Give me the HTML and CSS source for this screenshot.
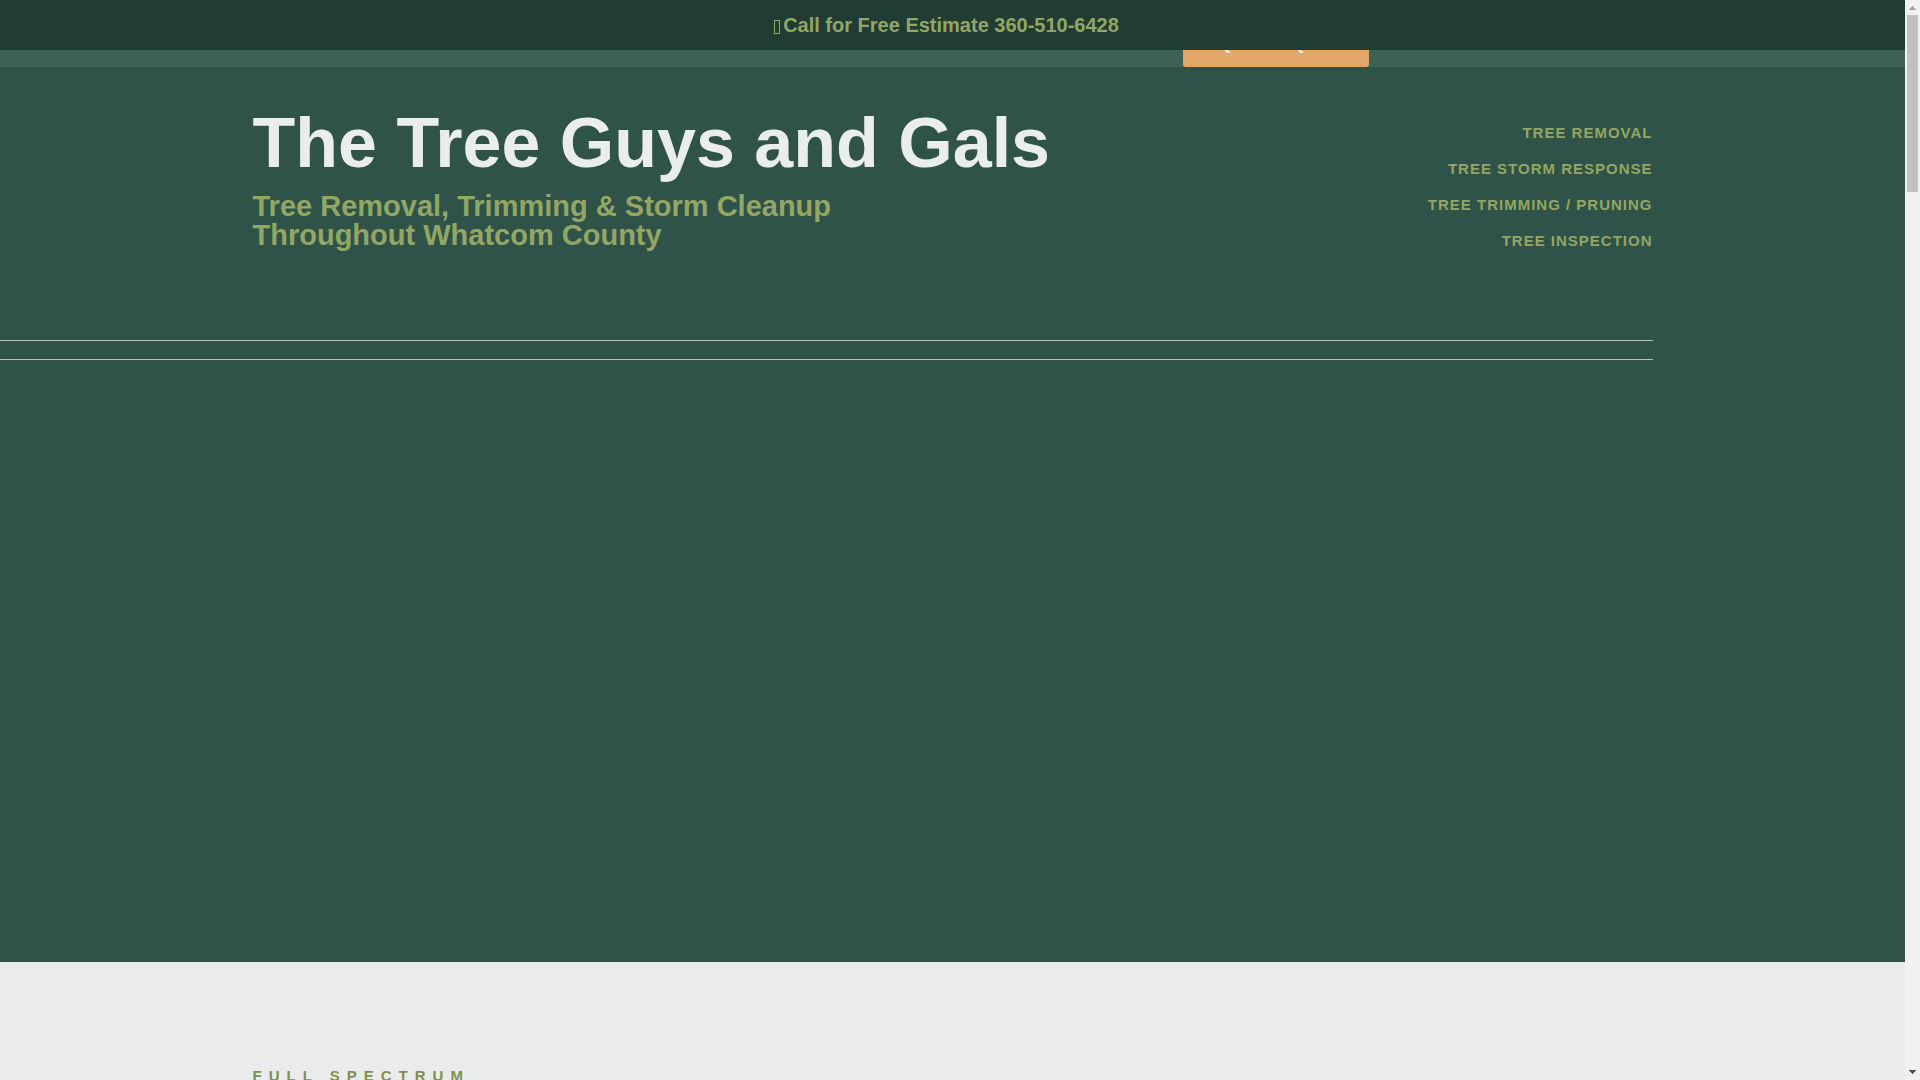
FILE: index.html
```html
<!DOCTYPE html>
<html lang="en">
<head>
    <meta charset="UTF-8">
    <meta name="viewport" content="width=device-width, initial-scale=1">
    <title>The Tree Guys and Gals</title>
    <link rel="stylesheet" href="styles.css">
</head>
<body>
    <div class="page">
        <div class="call-bar">
            <a href="tel:3605106428"><span class="phone-icon"></span>Call for Free Estimate 360-510-6428</a>
        </div>
        <header class="top-strip">
            <div class="container">
                <a class="quote-button" href="#quote">REQUEST A QUOTE</a>
            </div>
        </header>
        <main>
            <section class="hero">
                <div class="container hero-row">
                    <div class="hero-text">
                        <h1>The Tree Guys and Gals</h1>
                        <h2>Tree Removal, Trimming &amp; Storm Cleanup<br>Throughout Whatcom County</h2>
                    </div>
                    <nav class="services-nav">
                        <a href="#removal">TREE REMOVAL</a>
                        <a href="#storm">TREE STORM RESPONSE</a>
                        <a href="#trimming">TREE TRIMMING / PRUNING</a>
                        <a href="#inspection">TREE INSPECTION</a>
                    </nav>
                </div>
                <div class="lines"></div>
            </section>
            <section class="services">
                <div class="container">
                    <h3>FULL SPECTRUM</h3>
                </div>
            </section>
        </main>
    </div>
    <div class="scrollbar" aria-hidden="true">
        <svg width="15" height="15" viewBox="0 0 15 15" shape-rendering="crispEdges"><path d="M4 10h7v-1h-1v-1h-1v-1h-1v-1h-1v1h-1v1h-1v1h-1z" fill="#a3a3a3"/></svg>
        <div class="thumb"></div>
        <svg class="down" width="15" height="15" viewBox="0 0 15 15" shape-rendering="crispEdges"><path d="M4 5h7v1h-1v1h-1v1h-1v1h-1v-1h-1v-1h-1v-1h-1z" fill="#505050"/></svg>
    </div>
</body>
</html>
```

FILE: styles.css
```css
* { box-sizing: border-box; }
body {
    display: flex;
    height: 100vh;
    margin: 0;
    overflow: hidden;
    font-family: "Liberation Sans", Arial, sans-serif;
    font-weight: 700;
    background: #e9eceb;
}
a { color: inherit; text-decoration: none; }
h1, h2, h3 { margin: 0; }
.page {
    position: relative;
    flex: 1;
    min-width: 0;
    overflow: hidden;
}
.container {
    max-width: 1400px;
    margin: 0 auto;
}

/* phone bar, stays over the header */
.call-bar {
    position: absolute;
    top: 0;
    left: 0;
    right: 0;
    z-index: 2;
    height: 50px;
    padding-right: 12px;
    background: #213c33;
    color: #93a663;
    font-size: 20px;
    line-height: 50px;
    text-align: center;
}
.phone-icon {
    display: inline-block;
    width: 6px;
    height: 14px;
    margin-right: 3px;
    border: 1px solid #93a663;
    vertical-align: -2px;
}
.top-strip {
    height: 67px;
    padding-top: 23px;
    background: #3f6257;
}
.top-strip .container {
    display: flex;
    justify-content: flex-end;
    padding-right: 284px;
}
.quote-button {
    padding: 0 20px 0 16px;
    border-radius: 3px;
    background: #e1a869;
    color: #fff;
    font-size: 14px;
    line-height: 44px;
    letter-spacing: 1px;
}

/* hero */
.hero {
    min-height: 895px;
    padding-top: 41px;
    background: #305349;
}
.hero-row {
    display: flex;
    justify-content: space-between;
}
h1 {
    color: #e9eeec;
    font-size: 70px;
    line-height: 70px;
}
h2 {
    margin-top: 14px;
    color: #93a663;
    font-size: 29px;
    line-height: 29px;
}
.services-nav {
    display: flex;
    flex-direction: column;
    padding-top: 7px;
    color: #93a663;
    font-size: 15px;
    line-height: 36px;
    letter-spacing: 1px;
    text-align: right;
}
.lines {
    width: calc(50% + 700px);
    height: 20px;
    margin-top: 81px;
    border-top: 1px solid #b9bfbd;
    border-bottom: 1px solid #b9bfbd;
}

.services { padding-top: 104px; }
h3 {
    color: #7d8f52;
    font-size: 15px;
    line-height: 20px;
    letter-spacing: 7px;
}

/* scrollbar */
.scrollbar {
    display: flex;
    flex-direction: column;
    width: 15px;
    background: #f1f1f1;
}
.thumb {
    height: 177px;
    margin: 0 2px;
    background: #c1c1c1;
}
.scrollbar .down { margin-top: auto; }
```
